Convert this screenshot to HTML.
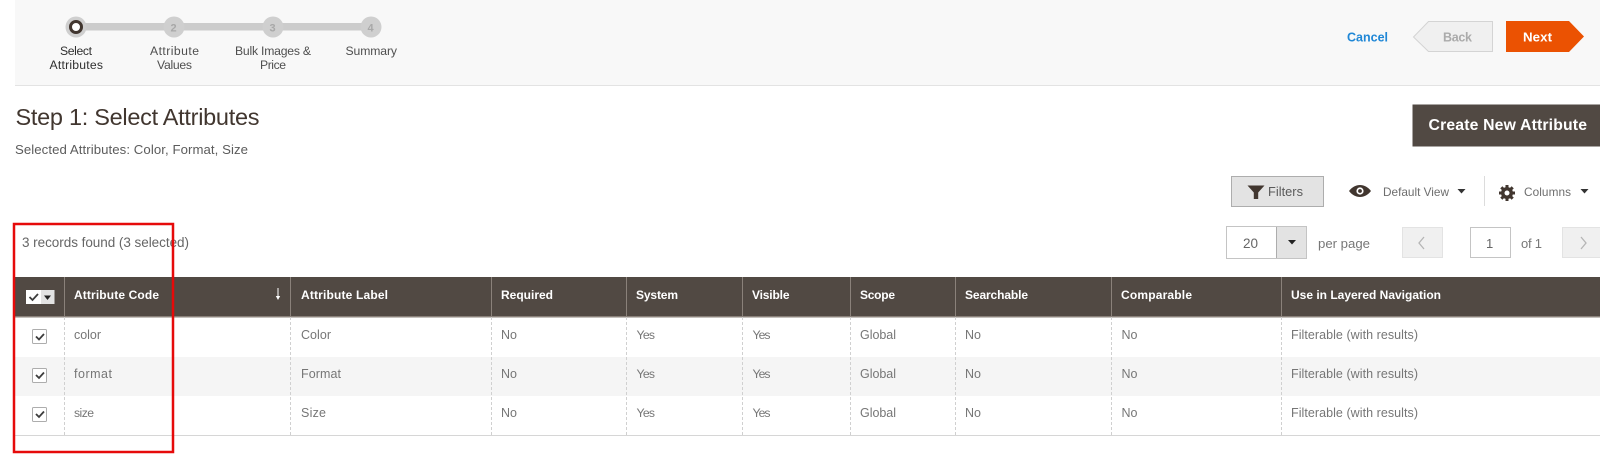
<!DOCTYPE html>
<html><head><meta charset="utf-8"><style>
html,body{margin:0;padding:0;background:#fff;width:1600px;height:470px;overflow:hidden}
svg{display:block}
text{font-family:"Liberation Sans",Arial,sans-serif;font-size:12.5px;fill:#6b6b6b}
.s{font-size:12.2px;fill:#4f4f4f}
.h{font-weight:bold;font-size:12px;fill:#fff}
.b{font-size:12.5px;fill:#767676}
.y{font-size:12.2px;fill:#767676}
.t{font-size:11.8px;fill:#6e6e6e}
.v{stroke:#d0d0d0;stroke-width:1;stroke-dasharray:3 2;fill:none}
.hv{stroke:#8a817a;stroke-width:1;fill:none}
.c{fill:none;stroke:#3d3d3d;stroke-width:1.8}
</style></head><body>
<svg width="1600" height="470" viewBox="0 0 1600 470" xmlns="http://www.w3.org/2000/svg">
<rect width="1600" height="470" fill="#fff"/>
<rect x="15" y="0" width="1585" height="85" fill="#f8f8f8"/>
<rect x="15" y="85" width="1585" height="1" fill="#e3e3e3"/>

<rect x="76" y="23" width="295" height="7.5" fill="#cccccc"/>
<circle cx="76" cy="27" r="10.5" fill="#cfcfcf"/>
<circle cx="76" cy="27" r="5.5" fill="#fff" stroke="#41362f" stroke-width="3"/>
<circle cx="174" cy="27" r="10.5" fill="#cfcfcf"/>
<circle cx="273" cy="27" r="10.5" fill="#cfcfcf"/>
<circle cx="371" cy="27" r="10.5" fill="#cfcfcf"/>
<text x="170.5" y="31.5" style="font-size:11px;fill:#a8a8a8;font-weight:bold">2</text>
<text x="269.5" y="31.5" style="font-size:11px;fill:#a8a8a8;font-weight:bold">3</text>
<text x="367.5" y="31.5" style="font-size:11px;fill:#a8a8a8;font-weight:bold">4</text>

<text class="s" x="60" y="55" textLength="32" style="fill:#303030">Select</text>
<text class="s" x="49.5" y="69" textLength="53.5" style="fill:#303030">Attributes</text>
<text class="s" x="150" y="55" textLength="49">Attribute</text>
<text class="s" x="157" y="69" textLength="35">Values</text>
<text class="s" x="235" y="55" textLength="76">Bulk Images &amp;</text>
<text class="s" x="260" y="69" textLength="26">Price</text>
<text class="s" x="345.5" y="55" textLength="51.5">Summary</text>

<text x="15.5" y="125" textLength="244" style="font-size:23.5px;fill:#41362f">Step 1: Select Attributes</text>
<text x="15" y="154" textLength="233" style="font-size:13.2px;fill:#5c5c5c">Selected Attributes: Color, Format, Size</text>

<text x="1347" y="41.5" textLength="41" style="font-size:12.5px;font-weight:bold;fill:#1f87d6">Cancel</text>
<polygon points="1413.5,37 1428.5,21.5 1492.5,21.5 1492.5,51.5 1428.5,51.5" fill="#f0f0f0" stroke="#d4d4d4"/>
<text x="1443" y="41.5" textLength="29" style="font-size:12.5px;font-weight:bold;fill:#ababab">Back</text>
<polygon points="1506,21 1569,21 1584,36.5 1569,52 1506,52" fill="#eb5202"/>
<text x="1523" y="41.5" textLength="29" style="font-size:13.3px;font-weight:bold;fill:#fff">Next</text>

<rect x="1412.5" y="104.5" width="188" height="42" fill="#514943"/>
<text x="1428.5" y="130" textLength="158.5" style="font-size:15.8px;font-weight:bold;fill:#fff">Create New Attribute</text>

<rect x="1231.5" y="176.5" width="92" height="30" fill="#e3e3e3" stroke="#adadad"/>
<path d="M1247.500 185.500h17l-6.300 7v6.500l-4.400 0v-6.500z" fill="#41362f"/>
<text x="1268" y="196" textLength="35" style="font-size:12.8px;fill:#5a5a5a">Filters</text>
<path d="M1349 191c3-4 7-6 11-6s8 2 11 6c-3 4-7 6-11 6s-8-2-11-6z" fill="#41362f"/>
<circle cx="1360" cy="191" r="3.600" fill="#fff"/>
<circle cx="1360" cy="191" r="1.900" fill="#41362f"/>
<text class="t" x="1383" y="196" textLength="66">Default View</text>
<polygon points="1457.500,189 1465.500,189 1461.500,193.500" fill="#333"/>
<rect x="1484" y="176" width="1" height="30" fill="#dcdcdc"/>
<g fill="#41362f">
<circle cx="1507" cy="193" r="6"/>
<path stroke="#41362f" stroke-width="3" d="M1507 185v16M1499 193h16M1501.300 187.300l11.400 11.400M1512.700 187.300l-11.400 11.400"/>
</g>
<circle cx="1507" cy="193" r="2.500" fill="#fff"/>
<text class="t" x="1524" y="196" textLength="47">Columns</text>
<polygon points="1580.500,189 1588.500,189 1584.500,193.500" fill="#333"/>

<text x="22" y="247" textLength="167" style="font-size:13.5px;fill:#666">3 records found (3 selected)</text>

<rect x="1226.500" y="226.500" width="80" height="32" fill="#fff" stroke="#c4c4c4"/>
<rect x="1277" y="227" width="29" height="31" fill="#e3e3e3"/>
<rect x="1276" y="227" width="1" height="31" fill="#adadad"/>
<text x="1243" y="248" textLength="15" style="font-size:13.5px;fill:#666">20</text>
<polygon points="1288,240 1296,240 1292,244.500" fill="#222"/>
<text x="1318" y="248" textLength="52" style="font-size:13.2px;fill:#777">per page</text>
<rect x="1402.500" y="227.500" width="40" height="30" fill="#f0f0f0" stroke="#e3e3e3"/>
<path d="M1424 237l-5 6 5 6" fill="none" stroke="#b5b5b5" stroke-width="1.300"/>
<rect x="1470.500" y="227.500" width="40" height="30" fill="#fff" stroke="#c4c4c4"/>
<text x="1486" y="248" textLength="6" style="font-size:13px;fill:#666">1</text>
<text x="1521" y="248" textLength="21" style="font-size:13px;fill:#777">of 1</text>
<rect x="1562.500" y="227.500" width="40" height="30" fill="#f0f0f0" stroke="#e3e3e3"/>
<path d="M1581 237l5 6-5 6" fill="none" stroke="#b5b5b5" stroke-width="1.300"/>

<rect x="15" y="277" width="1585" height="40" fill="#514943"/>
<rect x="15" y="316" width="1585" height="1.500" fill="#8a817a"/>
<rect x="15" y="357" width="1585" height="39" fill="#f5f5f5"/>
<rect x="15" y="435" width="1585" height="1" fill="#d6d6d6"/>

<path class="hv" d="M64.500 277v40M290.500 277v40M491.500 277v40M626.500 277v40M742.500 277v40M850.500 277v40M955.500 277v40M1111.500 277v40M1281.500 277v40"/>
<path class="v" d="M64.500 317v118M290.500 317v118M491.500 317v118M626.500 317v118M742.500 317v118M850.500 317v118M955.500 317v118M1111.500 317v118M1281.500 317v118"/>

<rect x="26" y="290" width="15" height="14" fill="#fff"/>
<rect x="41" y="290" width="13.500" height="14" fill="#e3e3e3"/>
<path class="c" d="M29.500 297l3 3 5.500-6"/>
<polygon points="44,295.500 51,295.500 47.500,300" fill="#222"/>
<path d="M278 288v10" stroke="#fff" stroke-width="1"/>
<path d="M275.800 296l2.200 4 2.200-4z" fill="#fff"/>

<text class="h" x="74" y="299" textLength="85">Attribute Code</text>
<text class="h" x="301" y="299" textLength="87">Attribute Label</text>
<text class="h" x="501" y="299" textLength="52">Required</text>
<text class="h" x="636" y="299" textLength="42">System</text>
<text class="h" x="752" y="299" textLength="37.500">Visible</text>
<text class="h" x="860" y="299" textLength="35">Scope</text>
<text class="h" x="965" y="299" textLength="63">Searchable</text>
<text class="h" x="1121" y="299" textLength="71">Comparable</text>
<text class="h" x="1291" y="299" textLength="150">Use in Layered Navigation</text>

<g fill="#fff" stroke="#adadad">
<rect x="32.500" y="329.500" width="14" height="14" rx="1"/>
<rect x="32.500" y="368.500" width="14" height="14" rx="1"/>
<rect x="32.500" y="407.500" width="14" height="14" rx="1"/>
</g>
<path class="c" d="M36 336.500l3 3 5-5.500M36 375l3 3 5-5.500M36 414l3 3 5-5.500"/>

<text class="b" x="74" y="339" textLength="27">color</text>
<text class="b" x="74" y="378" textLength="38">format</text>
<text class="y" x="74" y="417" textLength="20">size</text>
<text class="b" x="301" y="339" textLength="30">Color</text>
<text class="b" x="301" y="378" textLength="40">Format</text>
<text class="b" x="301" y="417" textLength="25">Size</text>
<g>
<text class="b" x="501" y="339" textLength="16">No</text><text class="b" x="501" y="378" textLength="16">No</text><text class="b" x="501" y="417" textLength="16">No</text>
<text class="y" x="636.500" y="339" textLength="18.500">Yes</text><text class="y" x="636.500" y="378" textLength="18.500">Yes</text><text class="y" x="636.500" y="417" textLength="18.500">Yes</text>
<text class="y" x="752.500" y="339" textLength="18">Yes</text><text class="y" x="752.500" y="378" textLength="18">Yes</text><text class="y" x="752.500" y="417" textLength="18">Yes</text>
<text class="b" x="860" y="339" textLength="36">Global</text><text class="b" x="860" y="378" textLength="36">Global</text><text class="b" x="860" y="417" textLength="36">Global</text>
<text class="b" x="965" y="339" textLength="16">No</text><text class="b" x="965" y="378" textLength="16">No</text><text class="b" x="965" y="417" textLength="16">No</text>
<text class="b" x="1121.500" y="339" textLength="16">No</text><text class="b" x="1121.500" y="378" textLength="16">No</text><text class="b" x="1121.500" y="417" textLength="16">No</text>
<text class="b" x="1291" y="339" textLength="127">Filterable (with results)</text><text class="b" x="1291" y="378" textLength="127">Filterable (with results)</text><text class="b" x="1291" y="417" textLength="127">Filterable (with results)</text>
</g>

<rect x="14" y="224" width="159" height="228" fill="none" stroke="#e60a0a" stroke-width="2.500"/>
</svg>
</body></html>
